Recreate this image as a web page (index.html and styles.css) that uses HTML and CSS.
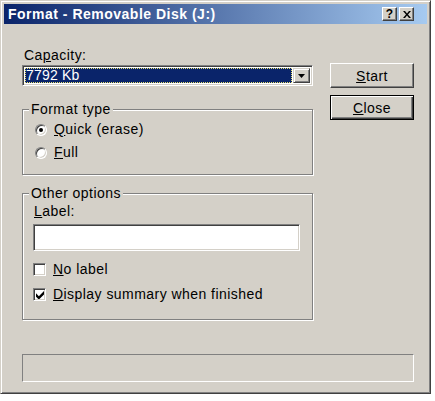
FILE: index.html
```html
<!DOCTYPE html>
<html>
<head>
<meta charset="utf-8">
<link rel="stylesheet" href="styles.css">
</head>
<body>
<div class="window">
  <div class="titlebar">
    <span class="title">Format - Removable Disk (J:)</span>
    <div class="tbtns">
      <span class="tbtn help">?</span>
      <span class="tbtn close">
        <svg width="8" height="7" viewBox="0 0 8 7"><path d="M0 0h2l2 2.5L6 0h2L5 3.5 8 7H6L4 4.5 2 7H0l3-3.5z" fill="#000"/></svg>
      </span>
    </div>
  </div>
  <div class="content">
    <div class="main">
      <div class="left">
        <div class="lbl cap">Ca<u>p</u>acity:</div>
        <div class="combo">
          <div class="combo-val"><span class="sel">7792 Kb</span></div>
          <div class="combo-btn"><svg width="7" height="4" viewBox="0 0 7 4"><path d="M0 0h7L3.5 4z" fill="#000"/></svg></div>
        </div>
        <div class="group g1">
          <div class="gtitle">Format type</div>
          <div class="opt r1"><span class="radio on"></span><span><u>Q</u>uick (erase)</span></div>
          <div class="opt r2"><span class="radio"></span><span><u>F</u>ull</span></div>
        </div>
        <div class="group g2">
          <div class="gtitle">Other options</div>
          <div class="lbl lab"><u>L</u>abel:</div>
          <div class="textbox"></div>
          <div class="opt c1"><span class="check"></span><span><u>N</u>o label</span></div>
          <div class="opt c2"><span class="check on"><svg width="8" height="8" viewBox="0 0 7 7"><path d="M0 2v3l2 2h1l4-4V0L2.5 4.5z" fill="#000"/></svg></span><span><u>D</u>isplay summary when finished</span></div>
        </div>
      </div>
      <div class="right">
        <div class="btn"><span><u>S</u>tart</span></div>
        <div class="btn default"><span><u>C</u>lose</span></div>
      </div>
    </div>
    <div class="status"></div>
  </div>
</div>
</body>
</html>
```

FILE: styles.css
```css
html, body { margin: 0; padding: 0; background: #ffffff; }
body { font-family: "Liberation Sans", Arial, sans-serif; font-size: 14px; letter-spacing: 0.45px; color: #000; }
u { text-decoration: underline; text-underline-offset: 1px; }

.window {
  width: 431px; height: 394px; box-sizing: border-box;
  background: #d4d0c8;
  border-top: 1px solid #d4d0c8; border-left: 1px solid #d4d0c8;
  border-right: 1px solid #404040; border-bottom: 1px solid #404040;
  box-shadow: inset 1px 1px 0 #ffffff, inset -1px -1px 0 #808080;
  padding: 3px;
  display: flex; flex-direction: column;
}
.titlebar {
  height: 20px; display: flex; align-items: center; justify-content: space-between;
  background: linear-gradient(to right, #0a246a, #a6caf0);
  padding: 0 13px 0 4px;
}
.title { color: #fff; font-weight: bold; font-size: 14px; letter-spacing: 0.5px; }
.tbtns { display: flex; gap: 2px; }
.tbtn {
  width: 15px; height: 14px; box-sizing: border-box; background: #d4d0c8;
  border-top: 1px solid #fff; border-left: 1px solid #fff;
  border-right: 1px solid #404040; border-bottom: 1px solid #404040;
  box-shadow: inset -1px -1px 0 #808080;
  display: flex; align-items: center; justify-content: center;
  font-weight: bold; font-size: 12px; line-height: 1; letter-spacing: 0;
}
.content { flex: 1; display: flex; flex-direction: column; padding: 0 13px 0 18px; }
.main { display: flex; justify-content: space-between; }
.left { width: 291px; display: flex; flex-direction: column; }
.lbl { line-height: 14px; }
.cap { margin-top: 24px; margin-left: 2px; }
.combo {
  margin-top: 3px; height: 21px; box-sizing: border-box; display: flex;
  border-top: 1px solid #808080; border-left: 1px solid #808080;
  border-right: 1px solid #fff; border-bottom: 1px solid #fff;
  box-shadow: inset 1px 1px 0 #404040, inset -1px -1px 0 #d4d0c8;
  padding: 2px; background: #fff; width: 291px;
}
.combo-val { flex: 1; display: flex; padding-right: 1px; }
.sel {
  flex: 1; background: #0a246a; color: #fff; line-height: 15px; padding-left: 1px;
  outline: 1px dotted #e8e070; outline-offset: -1px; letter-spacing: 0.2px;
}
.combo-btn {
  width: 17px; box-sizing: border-box; background: #d4d0c8;
  border-top: 1px solid #d4d0c8; border-left: 1px solid #d4d0c8;
  border-right: 1px solid #404040; border-bottom: 1px solid #404040;
  box-shadow: inset 1px 1px 0 #fff, inset -1px -1px 0 #808080;
  display: flex; align-items: center; justify-content: center;
}
.group {
  position: relative; border: 1px solid #808080;
  box-shadow: inset 1px 1px 0 #fff, 1px 1px 0 #fff;
  display: flex; flex-direction: column;
}
.gtitle {
  position: absolute; top: -8px; left: 6px; padding: 0 2px;
  background: #d4d0c8; line-height: 14px;
}
.g1 { margin-top: 23px; height: 66px; box-sizing: border-box; padding: 12px 0 0 12px; gap: 8px; }
.opt { display: flex; align-items: center; gap: 7px; line-height: 15px; }
.radio {
  width: 12px; height: 12px; border-radius: 50%; box-sizing: border-box; background: #fff;
  border: 1px solid; border-color: #808080 #fff #fff #808080;
  box-shadow: inset 1px 1px 0 #404040, inset -1px -1px 0 #d4d0c8;
  position: relative;
}
.radio.on::after {
  content: ""; position: absolute; left: 3px; top: 3px; width: 4px; height: 4px;
  border-radius: 50%; background: #000;
}
.g2 { margin-top: 18px; height: 127px; box-sizing: border-box; padding: 10px 12px 0 10px; }
.lab { margin-left: 1px; }
.textbox {
  margin-top: 6px; height: 27px; box-sizing: border-box; background: #fff;
  border-top: 1px solid #808080; border-left: 1px solid #808080;
  border-right: 1px solid #fff; border-bottom: 1px solid #fff;
  box-shadow: inset 1px 1px 0 #404040, inset -1px -1px 0 #d4d0c8;
}
.c1 { margin-top: 11px; }
.c2 { margin-top: 10px; }
.check {
  width: 13px; height: 13px; box-sizing: border-box; background: #fff;
  border: 1px solid; border-color: #808080 #fff #fff #808080;
  box-shadow: inset 1px 1px 0 #404040, inset -1px -1px 0 #d4d0c8;
  display: flex; align-items: center; justify-content: center;
}
.right { width: 84px; display: flex; flex-direction: column; gap: 7px; margin-top: 39px; }
.btn {
  height: 25px; box-sizing: border-box; background: #d4d0c8;
  border-top: 1px solid #fff; border-left: 1px solid #fff;
  border-right: 1px solid #404040; border-bottom: 1px solid #404040;
  box-shadow: inset -1px -1px 0 #808080;
  display: flex; align-items: center; justify-content: center; line-height: 14px;
}
.btn.default {
  border: 1px solid #000;
  box-shadow: inset 1px 1px 0 #fff, inset -1px -1px 0 #404040, inset -2px -2px 0 #808080;
}
.status {
  margin-top: 34px; height: 28px; box-sizing: border-box;
  border-top: 1px solid #808080; border-left: 1px solid #808080;
  border-right: 1px solid #fff; border-bottom: 1px solid #fff;
}
```
